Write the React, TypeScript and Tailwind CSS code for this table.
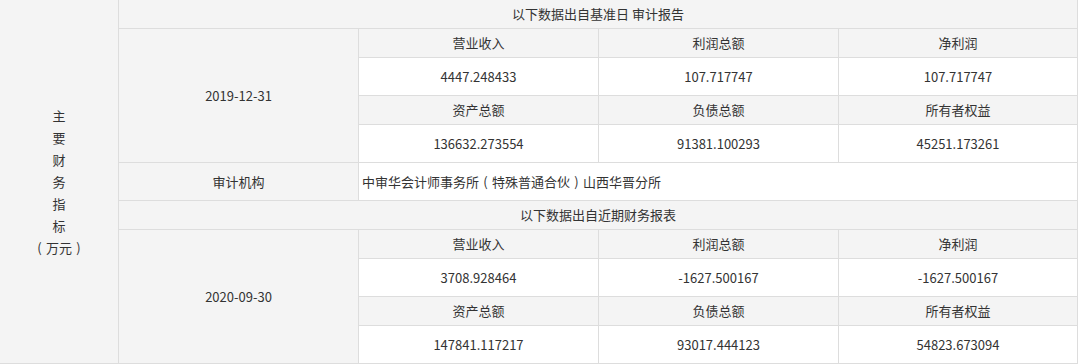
import React from "react";

const gray = "bg-[#f4f4f4]";
const cell = "flex items-center justify-center";

type Block = { date: string; title: string; rows: { labels: string[]; values: string[] }[] };

const blocks: Block[] = [
  {
    date: "2019-12-31",
    title: "以下数据出自基准日 审计报告",
    rows: [
      { labels: ["营业收入", "利润总额", "净利润"], values: ["4447.248433", "107.717747", "107.717747"] },
      { labels: ["资产总额", "负债总额", "所有者权益"], values: ["136632.273554", "91381.100293", "45251.173261"] },
    ],
  },
  {
    date: "2020-09-30",
    title: "以下数据出自近期财务报表",
    rows: [
      { labels: ["营业收入", "利润总额", "净利润"], values: ["3708.928464", "-1627.500167", "-1627.500167"] },
      { labels: ["资产总额", "负债总额", "所有者权益"], values: ["147841.117217", "93017.444123", "54823.673094"] },
    ],
  },
];

// full-width brackets drawn centred in a 1em box
function P({ c }: { c: string }) {
  return <span className="inline-block w-[1em] text-center">{c}</span>;
}

function Section({ block }: { block: Block }) {
  return (
    <>
      <div className={`${gray} ${cell} col-span-4`}>{block.title}</div>
      <div className={`${gray} ${cell} row-span-4`}>{block.date}</div>
      {block.rows.map((r, i) => (
        <React.Fragment key={i}>
          {r.labels.map((l) => (
            <div key={l} className={`${gray} ${cell}`}>{l}</div>
          ))}
          {r.values.map((v, j) => (
            <div key={j} className={`bg-white ${cell}`}>{v}</div>
          ))}
        </React.Fragment>
      ))}
    </>
  );
}

export default function App() {
  return (
    <div className="w-[1079px] h-[364px] bg-white overflow-hidden">
      <div
        className="grid w-[1078px] gap-px bg-[#dddddd] pr-px pb-px text-[13px] text-[#333333] grid-cols-[118px_239px_239px_239px_238px] grid-rows-[28px_28px_37px_28px_37px_37px_28px_28px_37px_28px_37px]"
        style={{ fontFamily: '"Noto Sans CJK SC", "Noto Sans", sans-serif' }}
      >
        {/* left title column */}
        <div className={`${gray} ${cell} row-span-11 flex-col leading-[22px]`}>
          {["主", "要", "财", "务", "指", "标"].map((c) => (
            <span key={c}>{c}</span>
          ))}
          <span>
            <P c="(" />万元<P c=")" />
          </span>
        </div>

        <Section block={blocks[0]} />

        {/* audit firm */}
        <div className={`${gray} ${cell}`}>审计机构</div>
        <div className="bg-white col-span-3 flex items-center pl-[3px]">
          <span>
            中审华会计师事务所<P c="(" />特殊普通合伙<P c=")" />山西华晋分所
          </span>
        </div>

        <Section block={blocks[1]} />
      </div>
    </div>
  );
}
